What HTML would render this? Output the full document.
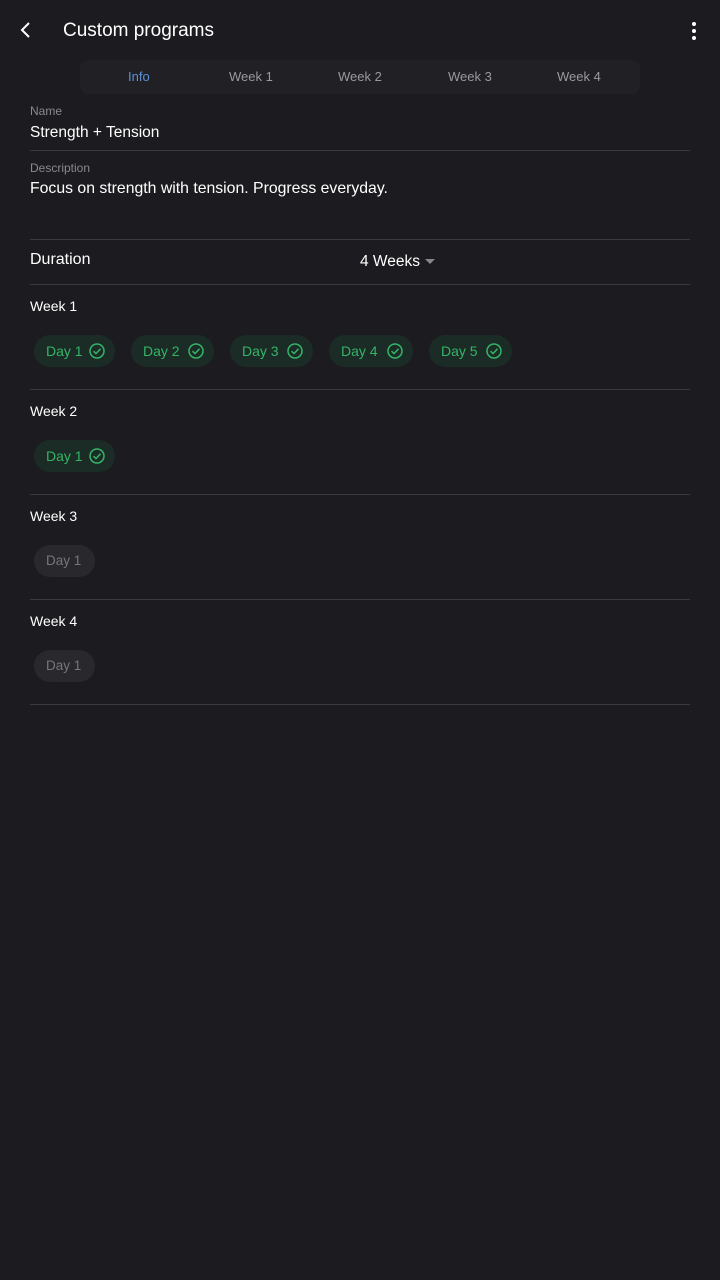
<!DOCTYPE html><html><head><style>
body{margin:0;width:720px;height:1280px;background:#1c1b20;font-family:"Liberation Sans",sans-serif;position:relative;overflow:hidden;color:#fff}
.a{position:absolute;white-space:nowrap}
.hr{position:absolute;left:30px;width:660px;height:1px;background:#3a393e}
.chip{position:absolute;height:32px;border-radius:16px;background:#1b2b25;color:#35b468;font-size:14px;line-height:32px;padding-left:12px;box-sizing:border-box;white-space:nowrap}
.chip svg{position:absolute;top:8px}
.g{background:#29282d;color:#77767b;padding:0 0 0 12px;font-size:13.5px}
</style></head><body>
<svg class="a" style="left:18px;top:21px" width="16" height="18" viewBox="0 0 16 18"><path d="M11 2 L4 9 L11 16" stroke="#fff" stroke-width="2" fill="none"/></svg>
<div class="a" style="left:63px;top:20px;font-size:19px">Custom programs</div>
<svg class="a" style="left:690px;top:21px" width="8" height="20"><circle cx="4" cy="3" r="2" fill="#fff"/><circle cx="4" cy="10" r="2" fill="#fff"/><circle cx="4" cy="17" r="2" fill="#fff"/></svg>
<div class="a" style="left:80px;top:60px;width:560px;height:34px;border-radius:8px;background:#212025"></div>
<div class="a" style="left:128px;top:69px;font-size:13px;color:#5b8fd8">Info</div>
<div class="a" style="left:229px;top:69px;font-size:13px;color:#9a999e">Week 1</div>
<div class="a" style="left:338px;top:69px;font-size:13px;color:#9a999e">Week 2</div>
<div class="a" style="left:448px;top:69px;font-size:13px;color:#9a999e">Week 3</div>
<div class="a" style="left:557px;top:69px;font-size:13px;color:#9a999e">Week 4</div>
<div class="a" style="left:30px;top:104px;font-size:12px;color:#8a898e">Name</div>
<div class="a" style="left:30px;top:124px;font-size:15.5px">Strength + Tension</div>
<div class="hr" style="top:150px"></div>
<div class="a" style="left:30px;top:161px;font-size:12px;color:#8a898e">Description</div>
<div class="a" style="left:30px;top:180px;font-size:15.8px">Focus on strength with tension. Progress everyday.</div>
<div class="hr" style="top:239px"></div>
<div class="a" style="left:30px;top:251px;font-size:16px">Duration</div>
<div class="a" style="left:360px;top:253px;font-size:15.5px">4 Weeks</div>
<svg class="a" style="left:425px;top:259px" width="10" height="6"><path d="M0 0 L10 0 L5 5Z" fill="#888"/></svg>
<div class="hr" style="top:284px"></div>
<div class="a" style="left:30px;top:298px;font-size:14px">Week 1</div>
<div class="chip" style="left:34px;top:335px;width:81px">Day 1<svg style="left:55px" width="16" height="16"><circle cx="8" cy="8" r="7" stroke="#35b468" stroke-width="1.5" fill="none"/><path d="M4.5 8.2 L7 10.6 L11.5 5.8" stroke="#35b468" stroke-width="1.5" fill="none"/></svg></div>
<div class="chip" style="left:131px;top:335px;width:83px">Day 2<svg style="left:57px" width="16" height="16"><circle cx="8" cy="8" r="7" stroke="#35b468" stroke-width="1.5" fill="none"/><path d="M4.5 8.2 L7 10.6 L11.5 5.8" stroke="#35b468" stroke-width="1.5" fill="none"/></svg></div>
<div class="chip" style="left:230px;top:335px;width:83px">Day 3<svg style="left:57px" width="16" height="16"><circle cx="8" cy="8" r="7" stroke="#35b468" stroke-width="1.5" fill="none"/><path d="M4.5 8.2 L7 10.6 L11.5 5.8" stroke="#35b468" stroke-width="1.5" fill="none"/></svg></div>
<div class="chip" style="left:329px;top:335px;width:84px">Day 4<svg style="left:58px" width="16" height="16"><circle cx="8" cy="8" r="7" stroke="#35b468" stroke-width="1.5" fill="none"/><path d="M4.5 8.2 L7 10.6 L11.5 5.8" stroke="#35b468" stroke-width="1.5" fill="none"/></svg></div>
<div class="chip" style="left:429px;top:335px;width:83px">Day 5<svg style="left:57px" width="16" height="16"><circle cx="8" cy="8" r="7" stroke="#35b468" stroke-width="1.5" fill="none"/><path d="M4.5 8.2 L7 10.6 L11.5 5.8" stroke="#35b468" stroke-width="1.5" fill="none"/></svg></div>
<div class="hr" style="top:389px"></div>
<div class="a" style="left:30px;top:403px;font-size:14px">Week 2</div>
<div class="chip" style="left:34px;top:440px;width:81px">Day 1<svg style="left:55px" width="16" height="16"><circle cx="8" cy="8" r="7" stroke="#35b468" stroke-width="1.5" fill="none"/><path d="M4.5 8.2 L7 10.6 L11.5 5.8" stroke="#35b468" stroke-width="1.5" fill="none"/></svg></div>
<div class="hr" style="top:494px"></div>
<div class="a" style="left:30px;top:508px;font-size:14px">Week 3</div>
<div class="chip g" style="left:34px;top:545px;width:61px">Day 1</div>
<div class="hr" style="top:599px"></div>
<div class="a" style="left:30px;top:613px;font-size:14px">Week 4</div>
<div class="chip g" style="left:34px;top:650px;width:61px">Day 1</div>
<div class="hr" style="top:704px"></div>
</body></html>
